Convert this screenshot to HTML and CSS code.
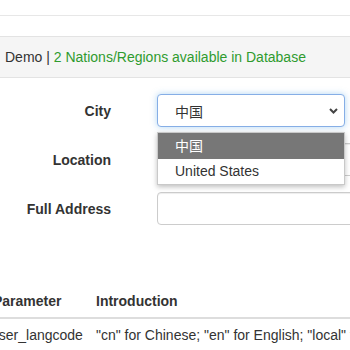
FILE: index.html
```html
<!DOCTYPE html>
<html>
<head>
<meta charset="utf-8">
<link rel="stylesheet" href="styles.css">
</head>
<body>
<div class="topbar"></div>
<div class="band"><span class="title">Demo | </span><span class="ok">2 Nations/Regions available in Database</span></div>
<form class="form">
  <div class="row">
    <label class="lbl">City</label>
    <div class="ctl-wrap">
      <div class="select"><span>中国</span>
        <svg class="chev" width="9" height="6" viewBox="0 0 9 6"><path d="M1 1 L4.5 4.5 L8 1" fill="none" stroke="#444" stroke-width="2"/></svg>
      </div>
      <div class="popup">
        <div class="opt sel">中国</div>
        <div class="opt">United States</div>
      </div>
    </div>
  </div>
  <div class="row">
    <label class="lbl">Location</label>
    <div class="ctl-wrap"><input class="input loc" placeholder="Please input location, e.g. p"></div>
  </div>
  <div class="row">
    <label class="lbl">Full Address</label>
    <div class="ctl-wrap"><input class="input wide"></div>
  </div>
</form>
<div class="table">
  <div class="thead">
    <div class="c1">Parameter</div>
    <div class="c2">Introduction</div>
  </div>
  <div class="trow">
    <div class="c1">user_langcode</div>
    <div class="c2">"cn" for Chinese; "en" for English; "local" for local</div>
  </div>
</div>
</body>
</html>
```
FILE: styles.css
```css
html, body { margin: 0; padding: 0; background: #fff; overflow: hidden; }
body { font-family: "Liberation Sans", Arial, sans-serif; font-size: 14px; color: #333; width: 350px; }
.topbar { height: 15px; border-bottom: 1px solid #e7e7e7; margin-bottom: 20px; }
.band { height: 40px; border-top: 1px solid #e3e3e3; border-bottom: 1px solid #e3e3e3; background: #f5f5f5; display: flex; align-items: center; padding-left: 5px; white-space: nowrap; font-size: 14px; }
.title { color: #333; white-space: pre; }
.ok { color: #2f9b2f; }
.form { padding-top: 16px; display: flex; flex-direction: column; gap: 16px; }
.row { display: flex; align-items: center; height: 33px; }
.lbl { width: 111px; text-align: right; font-weight: bold; margin-right: 46px; flex: none; }
.ctl-wrap { position: relative; flex: none; }
.select { box-sizing: border-box; width: 188px; height: 33px; border: 1px solid #86aee6; border-radius: 4px; box-shadow: 0 0 6px rgba(102,175,233,.5); display: flex; align-items: center; justify-content: space-between; padding: 0 6px 0 17px; font-family: "Liberation Sans", "Noto Sans CJK SC", sans-serif; color: #333; background: #fff; }
.chev { display: block; }
.popup { position: absolute; left: 0; top: 38px; width: 188px; box-sizing: border-box; background: #fff; border: 1px solid #c9c9c9; box-shadow: 0 2px 5px rgba(0,0,0,.25); z-index: 5; font-family: "Liberation Sans", "Noto Sans CJK SC", sans-serif; }
.opt { height: 25px; line-height: 25px; padding-left: 17px; color: #333; }
.opt.sel { background: #777; color: #fff; height: 26px; line-height: 26px; }
.input { box-sizing: border-box; height: 33px; border: 1px solid #ccc; border-radius: 4px; font: inherit; padding: 0 12px; box-shadow: inset 0 1px 1px rgba(0,0,0,.075); }
.loc { width: 230px; }
.loc::placeholder { color: #999; }
.wide { width: 230px; }
.table { margin-top: 59px; margin-left: -7px; white-space: nowrap; }
.thead, .trow { display: flex; }
.thead { font-weight: bold; height: 33px; align-items: center; border-bottom: 2px solid #ddd; }
.trow { height: 31px; align-items: center; }
.c1 { width: 103px; flex: none; }
.trow .c1 { margin-left: -2px; width: 105px; }
.c2 { flex: none; }
```
